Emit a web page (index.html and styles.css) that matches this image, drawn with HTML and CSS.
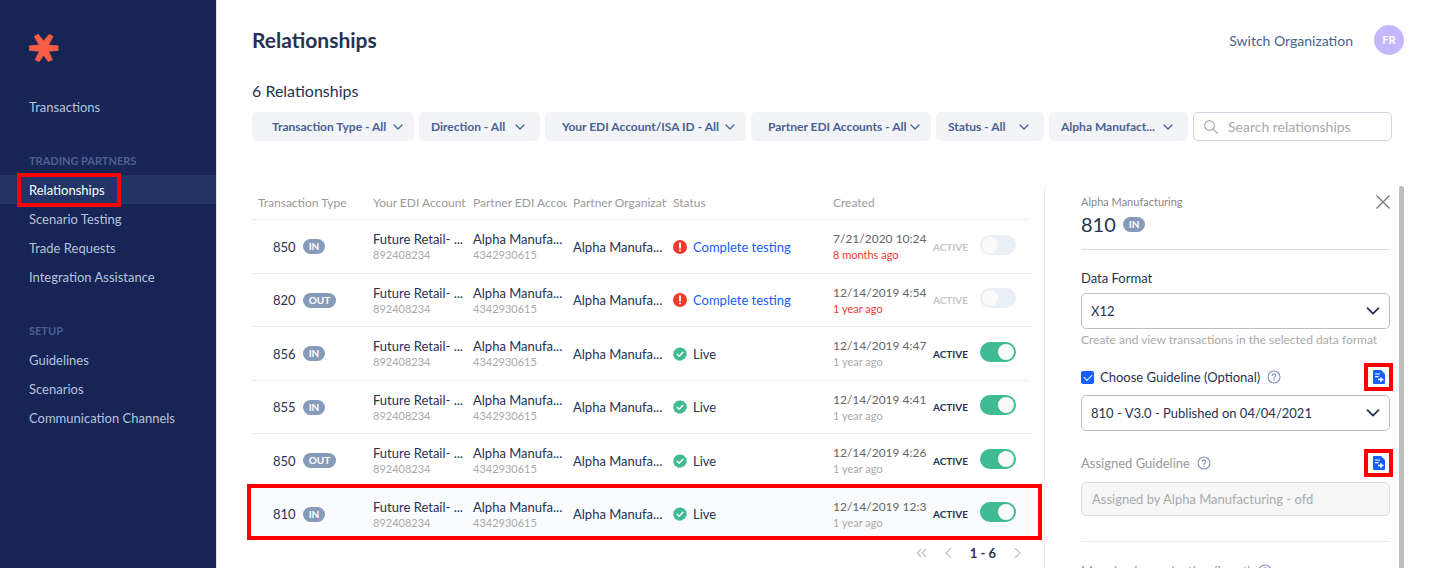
FILE: index.html
```html
<!DOCTYPE html>
<html lang="en">
<head>
    <meta charset="UTF-8">
    <meta name="viewport" content="width=device-width, initial-scale=1.0">
    <title>Relationships</title>
    <link rel="stylesheet" href="styles.css">
</head>
<body>
    <!-- shared icons -->
    <svg class="sprite" aria-hidden="true">
        <symbol id="chevron" viewBox="0 0 10 6"><path d="M1 1l4 4 4-4" fill="none" stroke="currentColor" stroke-width="1.3" stroke-linecap="round" stroke-linejoin="round"/></symbol>
        <symbol id="chevron-bold" viewBox="0 0 14 8"><path d="M1.500 1.200L7 6.600l5.500-5.400" fill="none" stroke="currentColor" stroke-width="1.800" stroke-linecap="round" stroke-linejoin="round"/></symbol>
        <symbol id="error" viewBox="0 0 14 14"><circle cx="7" cy="7" r="7" fill="#ee3a2f"/><path d="M7 3.200v4.600" stroke="#fff" stroke-width="1.800" stroke-linecap="round"/><circle cx="7" cy="10.600" r="1" fill="#fff"/></symbol>
        <symbol id="check" viewBox="0 0 14 14"><path d="M7 .2l1.800.8 2 .2 1.100 1.700 1.600 1.300-.1 2 .5 1.900-1.200 1.600-.6 1.900-1.900.7-1.500 1.300L7 13.400l-1.900.4-1.500-1.300-1.900-.7-.6-1.900L.1 8.100l.5-1.900-.1-2 1.600-1.300 1.100-1.700 2-.2z" fill="#3fba93"/><path d="M4.200 7.200l2 2 3.700-4" fill="none" stroke="#fff" stroke-width="1.400" stroke-linecap="round" stroke-linejoin="round"/></symbol>
        <symbol id="help" viewBox="0 0 14 14"><circle cx="7" cy="7" r="6" fill="none" stroke="#7f95bb" stroke-width="1.100"/><path d="M5.300 5.500a1.700 1.700 0 1 1 2.500 1.500c-.6.300-.8.600-.8 1.200" fill="none" stroke="#7f95bb" stroke-width="1.200" stroke-linecap="round"/><circle cx="7" cy="10.100" r=".8" fill="#7f95bb"/></symbol>
        <symbol id="doc" viewBox="0 0 12 14"><path d="M0 1a1 1 0 0 1 1-1h7l4 4v9a1 1 0 0 1-1 1H1a1 1 0 0 1-1-1z" fill="#155eff"/><path d="M2 4h5M2 6.700h3.500" fill="none" stroke="#fff" stroke-width="1.200"/><path d="M5 9.500h5.500M8 7.200v4.600" fill="none" stroke="#fff" stroke-width="1.500"/></symbol>
    </svg>

    <div class="app">
        <nav class="sidebar">
            <svg class="logo" viewBox="0 0 30 28" aria-label="Home"><path d="M.3 11.800L10 11 5.200 2.300 9.300.3 14.700 7 20 .3l4.200 2L19.500 11l9.700.8v4.600l-9.600.9 3.900 8.500-4.100 1.900-4.700-6.400-4.600 6.400-4-1.900 4.200-8.500L.3 16.400z" fill="#f75e44" stroke="#f75e44" stroke-width=".6" stroke-linejoin="round"/></svg>
            <a class="nav-link" href="#">Transactions</a>
            <h2 class="nav-title">TRADING PARTNERS</h2>
            <a class="nav-link current" href="#"><span class="marked">Relationships</span></a>
            <a class="nav-link" href="#">Scenario Testing</a>
            <a class="nav-link" href="#">Trade Requests</a>
            <a class="nav-link" href="#">Integration Assistance</a>
            <h2 class="nav-title">SETUP</h2>
            <a class="nav-link" href="#">Guidelines</a>
            <a class="nav-link" href="#">Scenarios</a>
            <a class="nav-link" href="#">Communication Channels</a>
        </nav>

        <main class="main">
            <header class="header">
                <h1>Relationships</h1>
                <div class="account">
                    <a href="#">Switch Organization</a>
                    <span class="avatar">FR</span>
                </div>
            </header>

            <p class="count">6 Relationships</p>

            <div class="filters">
                <div class="filter type"><select aria-label="Transaction type"><option>Transaction Type - All</option></select><svg><use href="#chevron"/></svg></div>
                <div class="filter direction"><select aria-label="Direction"><option>Direction - All</option></select><svg><use href="#chevron"/></svg></div>
                <div class="filter own"><select aria-label="Your EDI account"><option>Your EDI Account/ISA ID - All</option></select><svg><use href="#chevron"/></svg></div>
                <div class="filter partner"><select aria-label="Partner EDI accounts"><option>Partner EDI Accounts - All</option></select><svg><use href="#chevron"/></svg></div>
                <div class="filter status"><select aria-label="Status"><option>Status - All</option></select><svg><use href="#chevron"/></svg></div>
                <div class="filter org"><select aria-label="Partner"><option>Alpha Manufact...</option></select><svg><use href="#chevron"/></svg></div>
                <label class="search">
                    <svg viewBox="0 0 14 14"><circle cx="5.500" cy="5.500" r="4.800" fill="none" stroke="#aaa" stroke-width="1.200"/><path d="M9 9l4.300 4.300" stroke="#aaa" stroke-width="1.300" stroke-linecap="round"/></svg>
                    <input type="search" placeholder="Search relationships" aria-label="Search relationships">
                </label>
            </div>

            <div class="content">
                <section class="list">
                    <table>
                        <colgroup><col class="c-type"><col class="c-std"><col class="c-std"><col class="c-std"><col><col class="c-std"><col class="c-active"></colgroup>
                        <thead>
                            <tr><th>Transaction Type</th><th>Your EDI Account</th><th>Partner EDI Account</th><th>Partner Organization</th><th>Status</th><th>Created</th><th></th></tr>
                        </thead>
                        <tbody>
                            <tr>
                                <td><div class="kind">850 <span class="badge">IN</span></div></td>
                                <td>Future Retail- ...<small>892408234</small></td>
                                <td>Alpha Manufa...<small>4342930615</small></td>
                                <td>Alpha Manufa...</td>
                                <td><div class="state"><svg><use href="#error"/></svg><a href="#">Complete testing</a></div></td>
                                <td class="created">7/21/2020 10:24 PM<small class="late">8 months ago</small></td>
                                <td><label class="active">ACTIVE<input type="checkbox"></label></td>
                            </tr>
                            <tr>
                                <td><div class="kind">820 <span class="badge">OUT</span></div></td>
                                <td>Future Retail- ...<small>892408234</small></td>
                                <td>Alpha Manufa...<small>4342930615</small></td>
                                <td>Alpha Manufa...</td>
                                <td><div class="state"><svg><use href="#error"/></svg><a href="#">Complete testing</a></div></td>
                                <td class="created">12/14/2019 4:54 PM<small class="late">1 year ago</small></td>
                                <td><label class="active">ACTIVE<input type="checkbox"></label></td>
                            </tr>
                            <tr>
                                <td><div class="kind">856 <span class="badge">IN</span></div></td>
                                <td>Future Retail- ...<small>892408234</small></td>
                                <td>Alpha Manufa...<small>4342930615</small></td>
                                <td>Alpha Manufa...</td>
                                <td><div class="state"><svg><use href="#check"/></svg>Live</div></td>
                                <td class="created">12/14/2019 4:47 PM<small>1 year ago</small></td>
                                <td><label class="active on">ACTIVE<input type="checkbox" checked></label></td>
                            </tr>
                            <tr>
                                <td><div class="kind">855 <span class="badge">IN</span></div></td>
                                <td>Future Retail- ...<small>892408234</small></td>
                                <td>Alpha Manufa...<small>4342930615</small></td>
                                <td>Alpha Manufa...</td>
                                <td><div class="state"><svg><use href="#check"/></svg>Live</div></td>
                                <td class="created">12/14/2019 4:41 PM<small>1 year ago</small></td>
                                <td><label class="active on">ACTIVE<input type="checkbox" checked></label></td>
                            </tr>
                            <tr>
                                <td><div class="kind">850 <span class="badge">OUT</span></div></td>
                                <td>Future Retail- ...<small>892408234</small></td>
                                <td>Alpha Manufa...<small>4342930615</small></td>
                                <td>Alpha Manufa...</td>
                                <td><div class="state"><svg><use href="#check"/></svg>Live</div></td>
                                <td class="created">12/14/2019 4:26 PM<small>1 year ago</small></td>
                                <td><label class="active on">ACTIVE<input type="checkbox" checked></label></td>
                            </tr>
                            <tr class="selected">
                                <td><div class="kind">810 <span class="badge">IN</span></div></td>
                                <td>Future Retail- ...<small>892408234</small></td>
                                <td>Alpha Manufa...<small>4342930615</small></td>
                                <td>Alpha Manufa...</td>
                                <td><div class="state"><svg><use href="#check"/></svg>Live</div></td>
                                <td class="created">12/14/2019 12:36 PM<small>1 year ago</small></td>
                                <td><label class="active on">ACTIVE<input type="checkbox" checked></label></td>
                            </tr>
                        </tbody>
                    </table>
                    <div class="pager">
                        <button aria-label="First page"><svg viewBox="0 0 12 10"><path d="M5 1L1.500 5 5 9M10 1L6.500 5 10 9"/></svg></button>
                        <button aria-label="Previous page"><svg viewBox="0 0 12 10"><path d="M8 0L3 5l5 5"/></svg></button>
                        <span>1 - 6</span>
                        <button aria-label="Next page"><svg viewBox="0 0 12 10"><path d="M4 0l5 5-5 5"/></svg></button>
                    </div>
                </section>

                <aside class="panel">
                    <div class="panel-body">
                        <div class="panel-head">
                            <div>
                                <p>Alpha Manufacturing</p>
                                <h2>810 <span class="badge">IN</span></h2>
                            </div>
                            <button class="close" aria-label="Close"><svg viewBox="0 0 14 14"><path d="M.5.5l13 13M13.500.5l-13 13" stroke="#777" stroke-width="1.300"/></svg></button>
                        </div>

                        <label class="field-label" for="format">Data Format</label>
                        <div class="dropdown"><select id="format"><option>X12</option></select><svg><use href="#chevron-bold"/></svg></div>
                        <p class="hint">Create and view transactions in the selected data format</p>

                        <div class="field-row">
                            <input class="tick" type="checkbox" id="choose" checked>
                            <label for="choose">Choose Guideline (Optional)</label>
                            <svg class="help"><use href="#help"/></svg>
                            <button class="doc marked" aria-label="Open guideline"><svg><use href="#doc"/></svg></button>
                        </div>
                        <div class="dropdown guideline"><select aria-label="Guideline"><option>810 - V3.0 - Published on 04/04/2021</option></select><svg><use href="#chevron-bold"/></svg></div>

                        <div class="field-row muted">
                            <label for="assigned">Assigned Guideline</label>
                            <svg class="help"><use href="#help"/></svg>
                            <button class="doc marked" aria-label="Open assigned guideline"><svg><use href="#doc"/></svg></button>
                        </div>
                        <input class="assigned" id="assigned" type="text" value="Assigned by Alpha Manufacturing - ofd" disabled>

                        <div class="field-row next">
                            <span>Mapping in production (Input)</span>
                            <svg class="help"><use href="#help"/></svg>
                        </div>
                    </div>
                    <div class="scrollbar"></div>
                </aside>
            </div>
        </main>
    </div>
</body>
</html>
```
FILE: styles.css
```css
* { box-sizing: border-box; }
body { margin: 0; font-family: Lato, "Open Sans", sans-serif; font-size: 13px; color: #253353; background: #fff; }
h1, h2, p { margin: 0; }
a { text-decoration: none; }
button { padding: 0; border: none; background: none; cursor: pointer; }
select, input { font-family: inherit; }
svg { display: block; flex: none; }
.sprite { position: absolute; width: 0; height: 0; }

.app { display: flex; height: 100vh; overflow: hidden; }

/* sidebar */
.sidebar { flex: none; width: 217px; padding-top: 34px; background: #172456; border-right: 1px solid #dcdfea; }
.logo { width: 30px; height: 28px; margin: 0 0 30px 29px; }
.nav-link { display: flex; align-items: center; height: 29px; padding-left: 29px; color: #b4c3dc; }
.nav-title { height: 16px; margin: 32px 0 6px 29px; font-size: 11px; line-height: 16px; font-weight: bold; color: #4c6090; }
.current { background: #243365; color: #fff; }

/* red frame round the things to look at */
.marked { position: relative; }
.marked::after { content: ""; position: absolute; border: 4px solid #f00; pointer-events: none; }
.current .marked::after { inset: -9px -16px -9px -12px; }
.doc.marked::after { inset: -7px -8px -7px -9px; }

/* header */
.main { flex: 1; min-width: 0; padding: 0 35px; display: flex; flex-direction: column; }
.header { display: flex; justify-content: space-between; align-items: center; height: 30px; margin-top: 25px; }
h1 { font-size: 21px; line-height: 28px; }
.account { display: flex; align-items: center; gap: 21px; }
.account a { font-size: 14px; color: #486193; }
.avatar { width: 30px; height: 30px; border-radius: 50%; background: #c5b7fe; color: #fff; font-size: 11px; line-height: 30px; font-weight: bold; text-align: center; }
.count { margin-top: 26px; font-size: 16px; line-height: 20px; }

/* filters */
.filters { display: flex; gap: 5px; margin: 11px 12px 0 0; }
.filter { display: grid; align-items: center; flex: none; }
.filter select, .filter svg { grid-area: 1 / 1; }
.filter select { appearance: none; width: 100%; height: 29px; padding: 0 0 0 20px; border: none; border-radius: 5px; background: #f2f4f8; font-size: 12px; font-weight: bold; color: #486193; }
.filter svg { width: 10px; height: 6px; margin-right: 11px; justify-self: end; color: #486193; pointer-events: none; }
.type { width: 162px; }
.direction { width: 121px; }
.own { width: 201px; }
.partner { width: 180px; }
.status { width: 108px; }
.org { width: 139px; }
.own select, .partner select { padding-left: 17px; }
.direction select, .status select, .org select { padding-left: 12px; }
.direction svg, .status svg, .org svg { margin-right: 15px; }
.search { display: flex; align-items: center; gap: 10px; flex: 1; min-width: 0; height: 29px; padding: 0 10px; border: 1px solid #cfd6df; border-radius: 5px; }
.search svg { width: 14px; height: 14px; }
.search input { flex: 1; min-width: 0; padding: 0; border: none; outline: none; background: none; font-size: 14px; }
.search input::placeholder { color: #a9a9a9; }

/* table */
.content { display: flex; flex: 1; min-height: 0; gap: 14px; margin-top: 45px; }
.list { flex: 1; min-width: 0; }
table { width: 100%; table-layout: fixed; border-collapse: separate; border-spacing: 0; }
.c-type { width: 115px; }
.c-std { width: 100px; }
.c-active { width: 103px; }
th, td { padding: 0 0 0 6px; border-bottom: 1px solid #ebebeb; text-align: left; white-space: nowrap; overflow: hidden; }
th { height: 34px; font-size: 12px; font-weight: normal; color: #999; }
td { height: 54px; line-height: 16px; }
tr:nth-child(even) td { height: 53px; }
small { display: block; font-size: 11px; line-height: 15px; color: #aaa; }
.late { color: #ee3a2f; }
.created { font-size: 12px; color: #666; }
.kind { display: flex; align-items: center; gap: 7px; padding-left: 15px; }
.badge { height: 15px; padding: 0 6px; border-radius: 8px; background: #869aba; color: #fff; font-size: 10px; line-height: 15px; font-weight: bold; }
.state { display: flex; align-items: center; gap: 6px; }
.state svg { width: 14px; height: 14px; }
.state a { color: #155eff; }
.active { display: flex; align-items: center; justify-content: space-between; padding-right: 14px; font-size: 10px; font-weight: bold; color: #c4c4c4; }
.active.on { color: #253353; }
.active input { appearance: none; display: flex; width: 36px; height: 20px; margin: 0 0 4px; padding: 2px; border-radius: 10px; background: #eaeff7; }
.active input::before { content: ""; width: 16px; height: 16px; border-radius: 50%; background: #fafafa; }
.active input:checked { justify-content: flex-end; background: #3fba93; }
.selected { position: relative; background: #f9fbfd; }
.selected td { border-bottom-color: transparent; }
.selected td:first-child::after { content: ""; position: absolute; inset: -4px -12px 1px -5px; border: 4px solid #f00; pointer-events: none; }

.pager { display: flex; justify-content: flex-end; align-items: center; gap: 15px; height: 24px; padding-right: 7px; font-weight: bold; }
.pager svg { width: 12px; height: 10px; fill: none; stroke: #c4c4c4; stroke-width: 1.3; }

/* detail panel */
.panel { flex: none; display: flex; gap: 9px; width: 360px; border-left: 1px solid #ebebeb; }
.panel-body { flex: 1; min-width: 0; padding: 8px 0 0 36px; }
.scrollbar { width: 5px; border-radius: 3px 3px 0 0; background: #bfbfbf; }
.panel-head { display: flex; justify-content: space-between; align-items: flex-start; height: 56px; border-bottom: 1px solid #d5d8dc; }
.panel-head p { font-size: 11px; line-height: 16px; color: #888; }
.panel-head h2 { display: flex; align-items: center; gap: 7px; font-size: 20px; line-height: 28px; font-weight: normal; }
.close svg { width: 14px; height: 14px; }
.close { margin-top: 1px; }
.field-label { display: block; margin-top: 18px; line-height: 20px; }
.dropdown { display: grid; align-items: center; margin-top: 5px; }
.dropdown select, .dropdown svg { grid-area: 1 / 1; }
.dropdown select { appearance: none; height: 36px; padding: 0 9px; border: 1px solid #bfbfbf; border-radius: 5px; background: #fff; font-size: 13px; color: #253353; }
.dropdown svg { width: 14px; height: 8px; margin-right: 10px; justify-self: end; pointer-events: none; }
.guideline { margin-top: 8px; }
.hint { margin-top: 3px; font-size: 12px; line-height: 16px; color: #aaa; }
.field-row { display: flex; align-items: center; gap: 7px; height: 20px; margin-top: 19px; }
.tick { appearance: none; display: grid; place-items: center; width: 13px; height: 13px; margin: 0 -1px 0 0; border-radius: 2px; background: #155eff; }
.tick::before { content: ""; width: 7px; height: 4px; margin-bottom: 2px; border: solid #fff; border-width: 0 0 1px 1px; transform: rotate(-45deg); }
.help { width: 14px; height: 14px; }
.doc { margin: 0 5px 0 auto; }
.doc svg { width: 12px; height: 14px; }
.muted { margin-top: 22px; color: #999; }
.assigned { width: 100%; height: 34px; margin-top: 9px; padding: 0 10px; border: 1px solid #ddd; border-radius: 5px; background: #f7f7f7; font-size: 13px; color: #aaa; }
.next { margin-top: 25px; padding-top: 18px; height: 40px; border-top: 1px solid #ebebeb; color: #999; }
```
